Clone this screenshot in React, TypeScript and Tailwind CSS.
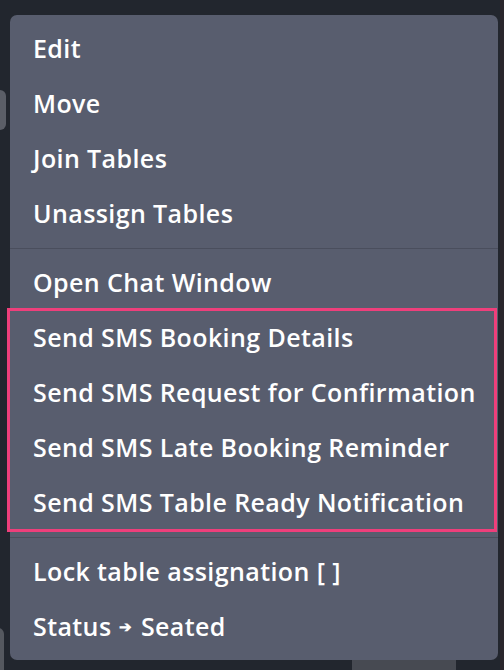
import React from "react";

const Item = ({ label }: { label: React.ReactNode }) => (
  <div className="h-[55px] flex items-center pl-[23px] text-white text-[25px] font-semibold tracking-[0.4px] whitespace-nowrap">
    {label}
  </div>
);

const Sep = () => (
  <div className="h-[14px] flex items-center">
    <div className="h-px w-full bg-[#4a4e5d]" />
  </div>
);

export default function App() {
  return (
    <div
      className="relative w-[504px] h-[670px] overflow-hidden bg-[#22262e]"
      style={{ fontFamily: '"Open Sans", "Lato", sans-serif' }}
    >
      {/* background elements peeking out */}
      <div className="absolute left-[-20px] top-[90px] w-[26px] h-[40px] rounded-md bg-[#5b5e67]" />
      <div className="absolute left-[-20px] top-[628px] w-[24px] h-[50px] rounded-md bg-[#55585f]" />
      <div className="absolute left-[352px] top-[650px] w-[104px] h-[30px] bg-[#474a52]" />
      <div className="absolute left-[500px] top-[0px] w-[4px] h-[670px] bg-[#2a262c]" />

      <div className="relative ml-[10px] mt-[15px] w-[488px] rounded-[7px] bg-[#585d6e] py-[6px]">
        <Item label="Edit" />
        <Item label="Move" />
        <Item label="Join Tables" />
        <Item label="Unassign Tables" />
        <Sep />
        <Item label="Open Chat Window" />
        <div className="relative">
          <Item label="Send SMS Booking Details" />
          <Item label="Send SMS Request for Confirmation" />
          <Item label="Send SMS Late Booking Reminder" />
          <Item label="Send SMS Table Ready Notification" />
          <div className="absolute left-[-3px] right-[1px] top-[-2px] bottom-[-2px] border-[3px] border-[#ee3f7b]" />
        </div>
        <Sep />
        <Item label="Lock table assignation [ ]" />
        <Item
          label={
            <span className="flex items-center">
              Status
              <span className="mx-[8px] text-[15px]">➔</span>
              Seated
            </span>
          }
        />
      </div>
    </div>
  );
}
